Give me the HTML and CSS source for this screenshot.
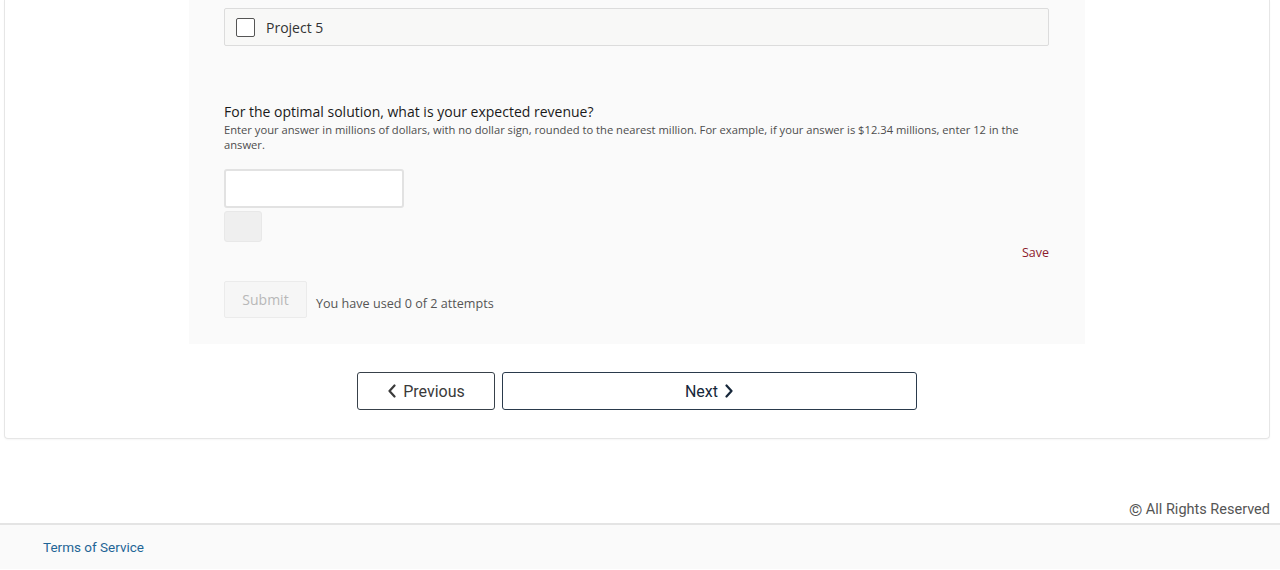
FILE: index.html
```html
<!DOCTYPE html>
<html lang="en">
<head>
<meta charset="utf-8">
<title>Problem</title>
<link rel="stylesheet" href="styles.css">
</head>
<body>
<div class="card">
  <div class="problem">
    <label class="choice">
      <span class="checkbox"></span>
      <span class="choice-label">Project 5</span>
    </label>
    <h3 class="question">For the optimal solution, what is your expected revenue?</h3>
    <p class="hint">Enter your answer in millions of dollars, with no dollar sign, rounded to the nearest million. For example, if your answer is $12.34 millions, enter 12 in the answer.</p>
    <div class="answer-input"></div>
    <div class="status-box"></div>
    <div class="save-row"><span class="save">Save</span></div>
    <div class="submit-row">
      <span class="submit">Submit</span>
      <span class="attempts">You have used 0 of 2 attempts</span>
    </div>
  </div>
  <div class="nav">
    <span class="nav-btn prev">
      <svg width="10" height="14" viewBox="0 0 10 14"><path d="M7.5 1.5 L2.5 7 L7.5 12.5" fill="none" stroke="currentColor" stroke-width="2.2" stroke-linecap="round" stroke-linejoin="round"/></svg>
      Previous
    </span>
    <span class="nav-btn next">
      Next
      <svg width="10" height="14" viewBox="0 0 10 14"><path d="M2.5 1.5 L7.5 7 L2.5 12.5" fill="none" stroke="currentColor" stroke-width="2.2" stroke-linecap="round" stroke-linejoin="round"/></svg>
    </span>
  </div>
</div>
<div class="rights"><span class="copy">&#169;</span> All Rights Reserved</div>
<footer class="footer">
  <span class="terms">Terms of Service</span>
</footer>
</body>
</html>
```
FILE: styles.css
```css
html, body {
  margin: 0;
  padding: 0;
  background: #ffffff;
  font-family: "Open Sans", "Noto Sans", sans-serif;
  color: #333;
}

.card {
  margin: 0 10px 0 4px;
  border: 1px solid #e6e6e6;
  border-top: none;
  border-radius: 0 0 4px 4px;
  padding-bottom: 28px;
  box-shadow: 0 1px 2px rgba(0,0,0,0.04);
}

.problem {
  margin-left: 184px;
  width: 896px;
  box-sizing: border-box;
  padding: 8px 36px 26px 35px;
  background: #fafafa;
}

.choice {
  display: flex;
  align-items: center;
  height: 38px;
  box-sizing: border-box;
  border: 1px solid #dcdcdc;
  border-radius: 2px;
  background: #f8f8f7;
  padding-left: 11px;
}

.checkbox {
  width: 17px;
  height: 17px;
  border: 1px solid #555;
  border-radius: 2px;
  background: #fff;
}

.choice-label {
  margin-left: 11px;
  font-size: 14px;
  color: #333;
}

.question {
  margin: 56px 0 0 0;
  font-size: 14px;
  font-weight: 400;
  line-height: 20px;
  color: #1a1a1a;
}

.hint {
  margin: 0;
  font-size: 11.2px;
  line-height: 15px;
  color: #4d4d4d;
  padding-right: 20px;
}

.answer-input {
  margin-top: 17px;
  width: 180px;
  height: 39px;
  box-sizing: border-box;
  border: 2px solid #e2e2e2;
  border-radius: 3px;
  background: #fff;
}

.status-box {
  margin-top: 3px;
  width: 38px;
  height: 31px;
  background: #efefef;
  border: 1px solid #e8e8e8;
  box-sizing: border-box;
  border-radius: 3px;
}

.save-row {
  display: flex;
  justify-content: flex-end;
  margin-top: 2px;
  height: 18px;
  line-height: 18px;
}

.save {
  font-size: 12.5px;
  color: #8c1b2d;
}

.submit-row {
  display: flex;
  align-items: center;
  margin-top: 19px;
}

.submit {
  display: flex;
  align-items: center;
  justify-content: center;
  width: 83px;
  height: 37px;
  box-sizing: border-box;
  border: 1px solid #ebebeb;
  border-radius: 2px;
  background: #f6f6f6;
  color: #b8b8b8;
  font-size: 14px;
}

.attempts {
  margin-left: 9px;
  margin-top: 7px;
  font-size: 12.6px;
  color: #555;
}

.nav {
  display: flex;
  justify-content: center;
  gap: 7px;
  margin-top: 28px;
}

.nav-btn {
  display: flex;
  align-items: center;
  justify-content: center;
  gap: 6px;
  height: 38px;
  box-sizing: border-box;
  border: 1px solid #38414a;
  border-radius: 3px;
  background: #fff;
  font-family: "Roboto", "Liberation Sans", sans-serif;
  font-size: 16px;
  color: #333;
}

.prev {
  width: 138px;
  color: #3a3a3a;
}

.next {
  width: 415px;
  color: #16273a;
  border-color: #2a3a4c;
}

.rights {
  margin-top: 62px;
  padding-right: 10px;
  text-align: right;
  font-family: "Roboto", "Liberation Sans", sans-serif;
  font-size: 14.5px;
  line-height: 18px;
  height: 18px;
  color: #555;
}

.copy {
  display: inline-block;
  font-size: 17px;
  line-height: 18px;
  vertical-align: top;
}

.footer {
  margin-top: 4px;
  border-top: 2px solid #e4e4e4;
  background: #fafafa;
  height: 44px;
  display: flex;
  align-items: center;
  padding-left: 43px;
}

.terms {
  font-family: "Roboto", "Liberation Sans", sans-serif;
  font-size: 13.5px;
  color: #1f6596;
}
```
